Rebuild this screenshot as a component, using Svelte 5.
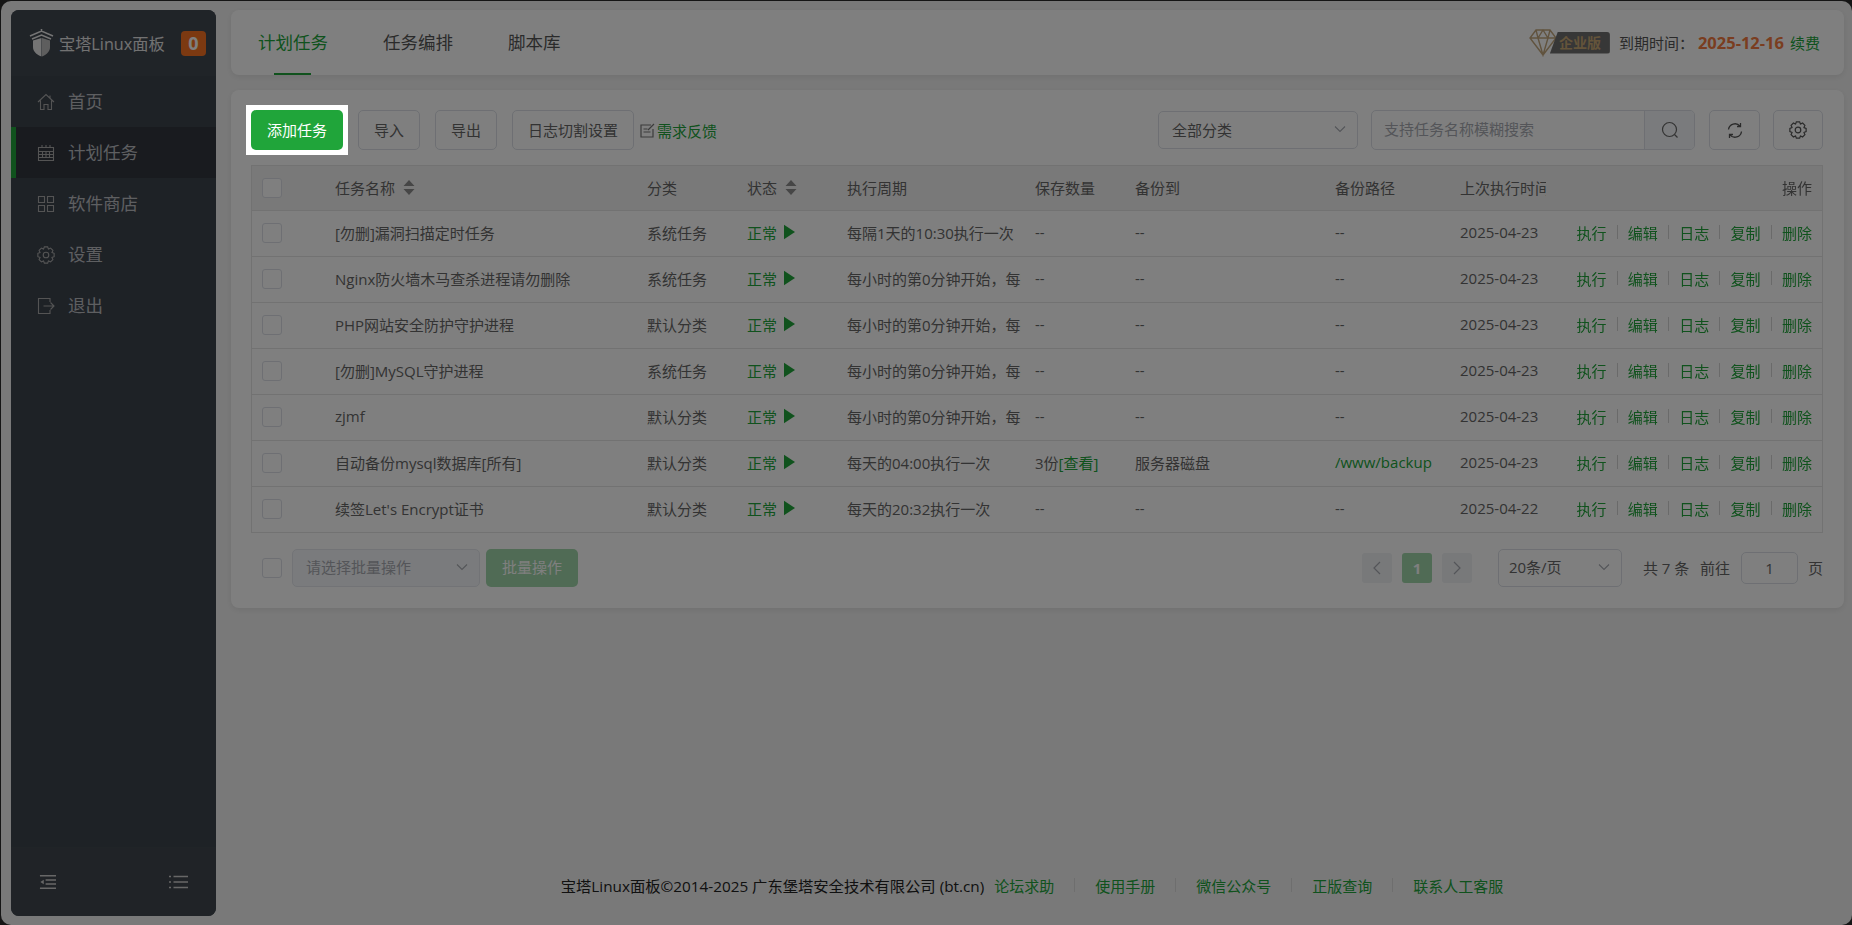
<script>
	// 计划任务 rows
	const tasks = [
		{ name: '[勿删]漏洞扫描定时任务', type: '系统任务', cycle: '每隔1天的10:30执行一次', keep: '--', to: '--', path: '--', last: '2025-04-23' },
		{ name: 'Nginx防火墙木马查杀进程请勿删除', type: '系统任务', cycle: '每小时的第0分钟开始，每隔5分钟执行一次', keep: '--', to: '--', path: '--', last: '2025-04-23' },
		{ name: 'PHP网站安全防护守护进程', type: '默认分类', cycle: '每小时的第0分钟开始，每隔5分钟执行一次', keep: '--', to: '--', path: '--', last: '2025-04-23' },
		{ name: '[勿删]MySQL守护进程', type: '系统任务', cycle: '每小时的第0分钟开始，每隔5分钟执行一次', keep: '--', to: '--', path: '--', last: '2025-04-23' },
		{ name: 'zjmf', type: '默认分类', cycle: '每小时的第0分钟开始，每隔5分钟执行一次', keep: '--', to: '--', path: '--', last: '2025-04-23' },
		{ name: '自动备份mysql数据库[所有]', type: '默认分类', cycle: '每天的04:00执行一次', keep: '3份', see: true, to: '服务器磁盘', path: '/www/backup', link: true, last: '2025-04-23' },
		{ name: "续签Let's Encrypt证书", type: '默认分类', cycle: '每天的20:32执行一次', keep: '--', to: '--', path: '--', last: '2025-04-22' }
	];
	const ops = ['执行', '编辑', '日志', '复制', '删除'];
	const menu = ['首页', '计划任务', '软件商店', '设置', '退出'];
	const links = ['论坛求助', '使用手册', '微信公众号', '正版查询', '联系人工客服'];

	// 8 tooth cog outline
	function cog(c, outer, inner) {
		let d = '';
		for (let i = 0; i < 8; i++) {
			const a = (i * Math.PI) / 4;
			const pts = [[inner, a - 0.39], [outer, a - 0.2], [outer, a + 0.2], [inner, a + 0.39]];
			for (const [r, t] of pts) {
				d += (d ? 'L' : 'M') + (c + r * Math.cos(t)).toFixed(2) + ' ' + (c + r * Math.sin(t)).toFixed(2);
			}
		}
		return d + 'z';
	}
</script>

{#snippet sort()}
	<svg class="sort" width="12" height="15" viewBox="0 0 12 15"><path d="M6 0l5.500 6H.5zM6 15L.5 9h11z" fill="#8d8d8d" /></svg>
{/snippet}

{#snippet chevron()}
	<svg class="chev" width="14" height="14" viewBox="0 0 14 14"><path d="M2 4.500l5 5 5-5" fill="none" stroke="#a8abb2" stroke-width="1.100" /></svg>
{/snippet}

<div class="page">
	<aside class="side">
		<div class="logo">
			<svg width="25" height="28" viewBox="0 0 25 28">
				<path d="M12.500 0v2M1 7L12.500 2 24 7M3 10l9.500-4 9.500 4" fill="none" stroke="#e8e8e8" stroke-width="1.600" />
				<path d="M4 11.500l8.500-2.500v18.500C7 25.500 4 22 4 18z" fill="#e8e8e8" />
				<path d="M21 11.500l-8-2.500v18.500c5-2 8-5.500 8-9.500z" fill="#bdbdbd" />
			</svg>
			<span class="brand">宝塔Linux面板</span>
			<span class="zero">0</span>
		</div>
		<nav class="nav">
			{#each menu as item, i}
				<div class="nav-item" class:active={i === 1}>
					<svg width="18" height="18" viewBox="0 0 18 18" fill="none" stroke="#a9a9a9" stroke-width="1.100">
						{#if i === 0}
							<path d="M1 9l8-7.500L17 9M3.500 7.500V16.500H7V11.500h4v5h3.500V7.500M13 2.500v2.500" />
						{:else if i === 1}
							<path d="M1.500 3.500h15v13h-15zM1.500 7.500h15M1.500 10.500h15M1.500 13.500h15M5 1v3M9 1v3M13 1v3M5.500 7.500v6M9 7.500v6M12.500 7.500v6" />
						{:else if i === 2}
							<path d="M1.500 1.500h6v6h-6zM10.500 1.500h6v6h-6zM1.500 10.500h6v6h-6zM10.500 10.500h6v6h-6z" />
						{:else if i === 3}
							<path d={cog(9, 8.300, 6.400)} />
							<circle cx="9" cy="9" r="2.800" />
						{:else}
							<path d="M13 5V1.500H1.500v15H13V13M6.500 9H17M13.500 5.500L17 9l-3.500 3.500" />
						{/if}
					</svg>
					<span>{item}</span>
				</div>
			{/each}
		</nav>
		<div class="side-foot">
			<svg width="17" height="16" viewBox="0 0 18 16" fill="none" stroke="#cfcfcf" stroke-width="1.600"><path d="M1 1.500h17M7 6h11M7 10h11M1 14.500h17" /><path d="M1.500 8L5 5.500v5z" fill="#cfcfcf" stroke="none" /></svg>
			<svg width="19" height="14" viewBox="0 0 19 14" fill="none" stroke="#cfcfcf" stroke-width="1.600"><path d="M4.500 1.500H19M4.500 7H19M4.500 12.500H19M0 1.500h2M0 7h2M0 12.500h2" /></svg>
		</div>
	</aside>

	<div class="main">
		<header class="tabs card">
			<div class="tab on">计划任务</div>
			<div class="tab">任务编排</div>
			<div class="tab">脚本库</div>
			<div class="expire">
				<svg width="28" height="29" viewBox="0 0 28 29" fill="none" stroke="#c2a67c" stroke-width="1.400"><path d="M7 2h14l6 8-13 17L1 10zM1 10h26M9 10l5 17 5-17M7 2l2 8 5-8 5 8 2-8" /></svg>
				<span class="level">企业版</span>
				<span class="lbl">到期时间：</span>
				<span class="date">2025-12-16</span>
				<span class="renew">续费</span>
			</div>
		</header>

		<section class="panel card">
			<div class="tools">
				<span class="add-wrap"><button class="btn add">添加任务</button></span>
				<button class="btn w62">导入</button>
				<button class="btn w62">导出</button>
				<button class="btn log">日志切割设置</button>
				<span class="need">
					<svg width="15" height="15" viewBox="0 0 15 15" fill="none" stroke="#777" stroke-width="1.200"><path d="M11 2H1v12h12V6M3.500 6h4M3.500 9h7M8 7l6-6" /></svg>
					需求反馈
				</span>
				<div class="tools-right">
					<div class="sel cat"><span>全部分类</span>{@render chevron()}</div>
					<div class="search">
						<span class="ph">支持任务名称模糊搜索</span>
						<span class="glass">
							<svg width="18" height="18" viewBox="0 0 18 18" fill="none" stroke="#666" stroke-width="1.200"><circle cx="8.500" cy="8.500" r="7" /><path d="M13.500 13.500l3 3" /></svg>
						</span>
					</div>
					<button class="btn ico first">
						<svg width="16" height="17" viewBox="0 0 16 17" fill="none" stroke="#555" stroke-width="1.300"><path d="M1.500 7.500A6.500 6.500 0 0 1 13 4.200M14.500 9.500A6.500 6.500 0 0 1 3 12.800M13.500 1v3.500H10M2.500 16v-3.500H6" /></svg>
					</button>
					<button class="btn ico">
						<svg width="18" height="18" viewBox="0 0 18 18" fill="none" stroke="#555" stroke-width="1.200"><path d={cog(9, 8.300, 6.400)} /><circle cx="9" cy="9" r="2.800" /></svg>
					</button>
				</div>
			</div>

			<div class="table-wrap">
				<table>
					<colgroup>
						<col style="width:73px" /><col style="width:312px" /><col style="width:100px" /><col style="width:100px" /><col style="width:188px" /><col style="width:100px" /><col style="width:200px" /><col style="width:125px" /><col style="width:97px" /><col style="width:276px" />
					</colgroup>
					<thead>
						<tr>
							<th><span class="check"></span></th>
							<th><span class="th-in">任务名称{@render sort()}</span></th>
							<th>分类</th>
							<th><span class="th-in">状态{@render sort()}</span></th>
							<th>执行周期</th>
							<th>保存数量</th>
							<th>备份到</th>
							<th>备份路径</th>
							<th>上次执行时间</th>
							<th class="fix right">操作</th>
						</tr>
					</thead>
					<tbody>
						{#each tasks as t}
							<tr>
								<td><span class="check"></span></td>
								<td>{t.name}</td>
								<td>{t.type}</td>
								<td class="green"><span class="state">正常<svg width="11" height="16" viewBox="0 0 12 16"><path d="M0 0l12 8-12 8z" fill="#20a53a" /></svg></span></td>
								<td><span class="cut">{t.cycle}</span></td>
								<td>{t.keep}{#if t.see}<span class="green">[查看]</span>{/if}</td>
								<td>{t.to}</td>
								<td class:green={t.link}>{t.path}</td>
								<td>{t.last}</td>
								<td class="fix">
									<span class="ops">
										{#each ops as op, i}
											{#if i > 0}<i></i>{/if}<span class="green">{op}</span>
										{/each}
									</span>
								</td>
							</tr>
						{/each}
					</tbody>
				</table>
			</div>

			<div class="pager-row">
				<div class="batch">
					<span class="check"></span>
					<div class="sel bsel"><span>请选择批量操作</span>{@render chevron()}</div>
					<button class="bbtn">批量操作</button>
				</div>
				<div class="pager">
					<span class="pg">
						<svg width="10" height="14" viewBox="0 0 10 14" fill="none" stroke="#a8abb2" stroke-width="1.200"><path d="M8 1L2 7l6 6" /></svg>
					</span>
					<span class="pg cur">1</span>
					<span class="pg">
						<svg width="10" height="14" viewBox="0 0 10 14" fill="none" stroke="#a8abb2" stroke-width="1.200"><path d="M2 1l6 6-6 6" /></svg>
					</span>
					<div class="sel size"><span>20条/页</span>{@render chevron()}</div>
					<span class="total">共 7 条</span>
					<span class="goto">前往</span>
					<span class="num">1</span>
					<span class="unit">页</span>
				</div>
			</div>
		</section>

		<footer class="foot">
			<span class="copy">宝塔Linux面板©2014-2025 广东堡塔安全技术有限公司 (bt.cn)</span>
			{#each links as l, i}
				{#if i > 0}<i></i>{/if}<span class="green">{l}</span>
			{/each}
		</footer>
	</div>

	<div class="mask"></div>
</div>

<style>
	:global(body) {
		margin: 0;
		background: #2b2b2b;
		overflow: hidden;
	}

	.page {
		position: relative;
		display: flex;
		box-sizing: border-box;
		width: 1851px;
		height: 924px;
		margin: 1px 0 0 1px;
		padding: 9px 8px 9px 10px;
		border-radius: 10px;
		background: #f3f3f3;
		font-family: "Open Sans", "Noto Sans CJK SC", sans-serif;
		font-size: 15px;
		color: #666;
	}

	.mask {
		position: absolute;
		inset: -1px 0 0 -1px;
		z-index: 5;
		background: rgba(0, 0, 0, 0.5);
		pointer-events: none;
	}

	.side {
		display: flex;
		flex-direction: column;
		flex: none;
		width: 205px;
		margin-right: 15px;
		border-radius: 8px;
		background: #3c444d;
		overflow: hidden;
	}

	.logo {
		display: flex;
		align-items: center;
		height: 66px;
		flex: none;
		padding: 0 10px 0 18px;
		background: #414851;
	}

	.brand {
		margin-left: 5px;
		font-size: 16.200px;
		color: #e4e4e4;
		white-space: nowrap;
	}

	.zero {
		display: flex;
		align-items: center;
		justify-content: center;
		width: 25px;
		height: 25px;
		margin-left: auto;
		border-radius: 4px;
		background: #f87322;
		color: #fff;
		font-size: 18px;
		font-weight: 700;
	}

	.nav {
		flex: 1;
	}

	.nav-item {
		display: flex;
		align-items: center;
		gap: 13px;
		box-sizing: border-box;
		height: 51px;
		padding-left: 26px;
		font-size: 17.500px;
		color: #bcbfc3;
	}

	.nav-item span {
		margin-bottom: 2px;
	}

	.nav-item.active {
		border-left: 5px solid #20a53a;
		padding-left: 21px;
		background: #32363e;
	}

	.side-foot {
		display: flex;
		justify-content: space-between;
		align-items: center;
		height: 68px;
		padding: 0 28px 0 28px;
		border-top: 1px solid #41484f;
		background: #40474f;
	}

	.main {
		display: flex;
		flex-direction: column;
		flex: 1;
		min-width: 0;
	}

	.card {
		border-radius: 8px;
		background: #fff;
		box-shadow: 0 2px 6px rgba(0, 0, 0, 0.08);
	}

	.tabs {
		display: flex;
		align-items: center;
		flex: none;
		height: 65px;
		padding: 0 24px 0 27px;
		gap: 55px;
	}

	.tab {
		position: relative;
		line-height: 65px;
		font-size: 17.500px;
		color: #555;
	}

	.tab.on {
		color: #20a53a;
	}

	.tab.on::after {
		content: "";
		position: absolute;
		left: 16px;
		right: 17px;
		bottom: 0;
		height: 2px;
		background: #20a53a;
	}

	.expire {
		display: flex;
		align-items: center;
		margin-left: auto;
	}

	.level {
		width: 60px;
		height: 22px;
		margin: 0 9px 0 -7px;
		line-height: 22px;
		text-align: center;
		border-radius: 0 3px 3px 0;
		clip-path: polygon(8px 0, 100% 0, 100% 100%, 0 100%);
		background: #6e6e6e;
		color: #c8a875;
		font-size: 14px;
		font-weight: 700;
	}

	.lbl {
		color: #555;
		width: 79px;
	}

	.date {
		color: #f57a40;
		font-size: 16.500px;
		font-weight: 700;
		margin-right: 6px;
	}

	.renew,
	.green {
		color: #20a53a;
	}

	.panel {
		flex: none;
		height: 518px;
		margin-top: 15px;
		padding: 20px 20px 0;
		box-sizing: border-box;
	}

	.tools {
		display: flex;
		align-items: center;
		width: 1572px;
		height: 40px;
	}

	.btn {
		box-sizing: border-box;
		height: 40px;
		margin: 0 15px 0 0;
		padding: 0 0 2px;
		border: 1px solid #dcdfe6;
		border-radius: 5px;
		background: #fff;
		font: inherit;
		font-size: 15px;
		color: #666;
	}

	.add-wrap {
		position: relative;
		z-index: 6;
		display: flex;
		margin: 0 10px 0 -5px;
		padding: 5px;
		background: #fff;
	}

	.add {
		width: 92px;
		margin: 0;
		border: none;
		background: #20a53a;
		color: #fff;
	}

	.w62 {
		width: 62px;
	}

	.log {
		width: 122px;
		margin-right: 6px;
	}

	.need {
		display: flex;
		align-items: center;
		gap: 2px;
		color: #20a53a;
		white-space: nowrap;
	}

	.tools-right {
		display: flex;
		margin-left: auto;
	}

	.tools-right .btn {
		margin: 0 0 0 13px;
		padding: 0;
	}

	.tools-right .first {
		width: 51px;
		margin-left: 14px;
	}

	.ico {
		display: flex;
		align-items: center;
		justify-content: center;
		width: 50px;
	}

	.sel {
		display: flex;
		align-items: center;
		justify-content: space-between;
		box-sizing: border-box;
		height: 38px;
		padding: 0 10px 2px 13px;
		border: 1px solid #dcdfe6;
		border-radius: 5px;
		background: #fff;
		white-space: nowrap;
	}

	.cat {
		width: 200px;
		margin: 1px 13px 0 0;
	}

	.search {
		display: flex;
		box-sizing: border-box;
		width: 324px;
		height: 40px;
		border: 1px solid #dcdfe6;
		border-radius: 5px;
		overflow: hidden;
	}

	.ph {
		flex: 1;
		padding-left: 12px;
		line-height: 36px;
		color: #a8abb2;
		white-space: nowrap;
	}

	.glass {
		display: flex;
		align-items: center;
		justify-content: center;
		width: 49px;
		border-left: 1px solid #dcdfe6;
		background: #f5f7fa;
	}

	.table-wrap {
		width: 1572px;
		margin-top: 15px;
		border: 1px solid #e4e4e4;
		border-width: 1px 1px 0;
		box-sizing: border-box;
		overflow: hidden;
	}

	table {
		width: 1571px;
		table-layout: fixed;
		border-collapse: collapse;
	}

	th,
	td {
		box-sizing: border-box;
		height: 46px;
		padding: 0 10px;
		border-bottom: 1px solid #e4e4e4;
		background: #fff;
		font-weight: 400;
		text-align: left;
		white-space: nowrap;
		overflow: hidden;
	}

	td {
		padding-bottom: 2px;
	}

	td .check {
		margin-top: 2px;
	}

	th {
		height: 44px;
		background: #f3f3f3;
		color: #666;
	}

	th.right {
		text-align: right;
	}

	td.green {
		color: #20a53a;
	}

	.fix {
		position: sticky;
		right: 0;
		box-shadow: -3px 0 5px rgba(0, 0, 0, 0.06);
	}

	.cut {
		display: block;
		width: 174px;
		overflow: hidden;
	}

	.th-in,
	.state {
		display: inline-flex;
		align-items: center;
	}

	.sort {
		margin-left: 8px;
	}

	.state svg {
		margin-left: 7px;
	}

	.check {
		display: block;
		box-sizing: border-box;
		width: 20px;
		height: 20px;
		border: 1px solid #dcdfe6;
		border-radius: 3px;
		background: #fff;
	}

	.ops {
		display: flex;
		justify-content: flex-end;
		align-items: center;
	}

	.ops i {
		width: 1px;
		height: 14px;
		margin: 0 10.200px;
		background: #d5d5d5;
	}

	.pager-row {
		display: flex;
		justify-content: space-between;
		align-items: center;
		height: 38px;
		margin-top: 16px;
		width: 1572px;
	}

	.batch {
		display: flex;
		align-items: center;
		padding-left: 11px;
	}

	.bsel {
		width: 188px;
		margin: 0 6px 0 10px;
		color: #a8abb2;
		background: #f5f7fa;
		border-color: #e4e7ed;
	}

	.bbtn {
		width: 92px;
		height: 38px;
		padding: 0 0 2px;
		border: none;
		border-radius: 5px;
		background: #a0d6aa;
		color: #fff;
		font: inherit;
		font-size: 15px;
	}

	.pager {
		display: flex;
		align-items: center;
	}

	.pg {
		display: flex;
		align-items: center;
		justify-content: center;
		width: 30px;
		height: 30px;
		margin-right: 10px;
		border-radius: 3px;
		background: #f0f2f5;
	}

	.pg.cur {
		background: #a0d6aa;
		color: #fff;
		font-weight: 700;
	}

	.size {
		width: 124px;
		margin: 0 21px 0 16px;
		padding-left: 10px;
		color: #666;
	}

	.total {
		width: 47px;
		white-space: nowrap;
	}

	.goto {
		margin: 0 11px 0 10px;
	}

	.num {
		box-sizing: border-box;
		width: 57px;
		height: 32px;
		line-height: 30px;
		margin-right: 10px;
		text-align: center;
		border: 1px solid #dcdfe6;
		border-radius: 5px;
	}

	.foot {
		display: flex;
		align-items: center;
		justify-content: center;
		margin-top: auto;
		margin-bottom: 19px;
		padding-right: 11px;
		height: 24px;
		white-space: nowrap;
		font-size: 15px;
		color: #333;
	}

	.copy {
		margin-right: 10px;
		font-size: 15.300px;
		color: #222;
	}

	.foot i {
		width: 1px;
		height: 14px;
		margin: 0 20px;
		background: #ddd;
	}
</style>
